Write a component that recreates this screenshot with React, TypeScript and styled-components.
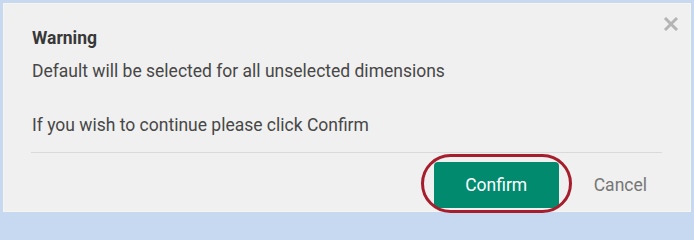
import React from "react"
import { createGlobalStyle, styled } from "styled-components"

const GlobalStyle = createGlobalStyle`
  html, body {
    margin: 0;
    padding: 0;
    background: #c6d9f1;
  }
  body {
    font-family: Roboto, "Liberation Sans", sans-serif;
  }
`

const Frame = styled.div`
  padding: 3px 3px 4px 3px;
  width: 694px;
  height: 216px;
  box-sizing: border-box;
`

const Dialog = styled.div`
  position: relative;
  height: 209px;
  box-sizing: border-box;
  background: #f0f0f0;
  border: 1px solid #f7f6ee;
  padding: 22px 28px 0 27px;
  display: flex;
  flex-direction: column;
`

const CloseButton = styled.button`
  position: absolute;
  top: 9px;
  right: 8px;
  width: 22px;
  height: 22px;
  padding: 0;
  border: none;
  background: none;
  display: flex;
  align-items: center;
  justify-content: center;
  cursor: pointer;
`

const Title = styled.div`
  font-size: 17.5px;
  line-height: 24px;
  font-weight: 700;
  color: #383838;
  margin-left: 1px;
`

const Message = styled.p<{ $gap: number }>`
  margin: ${(p) => p.$gap}px 0 0 1px;
  font-size: 17.5px;
  line-height: 24px;
  color: #474747;
`

const Divider = styled.hr`
  margin: 15px 0 0 0;
  border: none;
  border-top: 1px solid #dadada;
`

const Footer = styled.div`
  display: flex;
  justify-content: flex-end;
  align-items: center;
  gap: 20px;
  margin-top: 9px;
`

const Highlight = styled.div`
  position: relative;
  display: flex;
`

const Ring = styled.div`
  position: absolute;
  left: -13px;
  right: -13px;
  top: -8px;
  bottom: -5px;
  border: 3px solid #a61d2b;
  border-radius: 30px;
  pointer-events: none;
`

const PrimaryButton = styled.button`
  width: 125px;
  height: 46px;
  border: none;
  border-radius: 4px;
  background: #028a6f;
  color: #ffffff;
  font-family: Roboto, "Liberation Sans", sans-serif;
  font-size: 17.5px;
  cursor: pointer;
`

const TextButton = styled.button`
  height: 46px;
  padding: 0 15px;
  border: none;
  background: none;
  color: #767676;
  font-family: Roboto, "Liberation Sans", sans-serif;
  font-size: 17.5px;
  cursor: pointer;
`

const App = function () {
  return (
    <>
      <GlobalStyle />
      <Frame>
        <Dialog>
          <CloseButton aria-label="Close">
            <svg width="16" height="16" viewBox="0 0 16 16">
              <path
                d="M2 2 L14 14 M14 2 L2 14"
                stroke="#b4b4b4"
                strokeWidth="3"
                strokeLinecap="butt"
              />
            </svg>
          </CloseButton>
          <Title>Warning</Title>
          <Message $gap={9}>
            Default will be selected for all unselected dimensions
          </Message>
          <Message $gap={30}>If you wish to continue please click Confirm</Message>
          <Divider />
          <Footer>
            <Highlight>
              <Ring />
              <PrimaryButton>Confirm</PrimaryButton>
            </Highlight>
            <TextButton>Cancel</TextButton>
          </Footer>
        </Dialog>
      </Frame>
    </>
  )
}

export default App
